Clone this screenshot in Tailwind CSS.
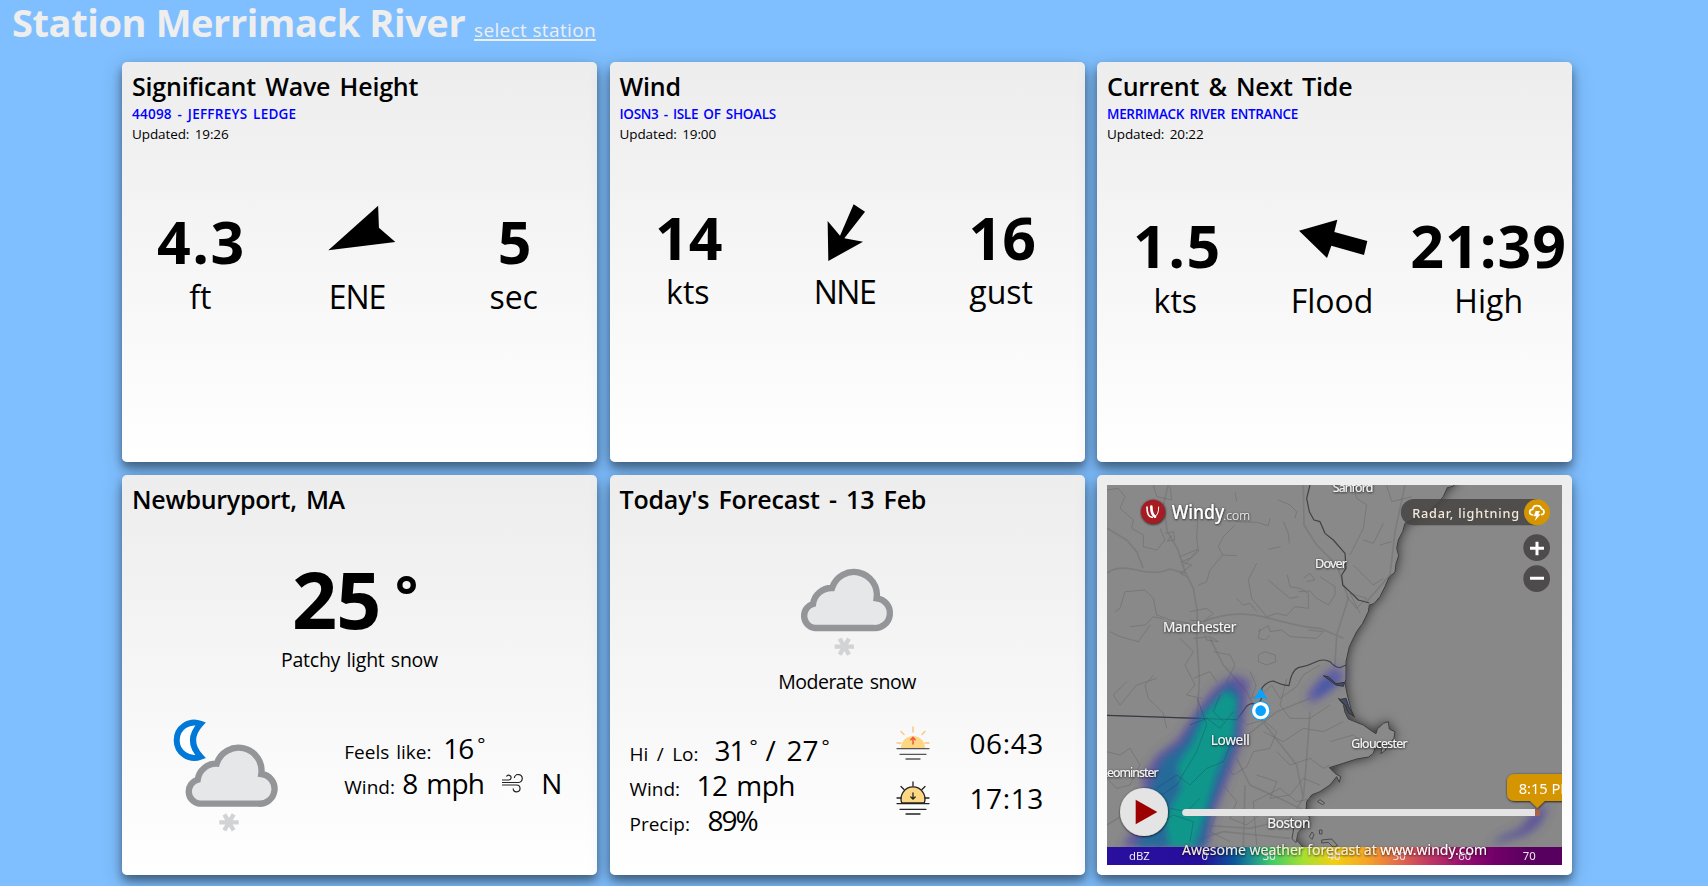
<!DOCTYPE html>
<html lang="en">
<head>
<meta charset="utf-8">
<title>Station Merrimack River</title>
<script src="https://cdn.jsdelivr.net/npm/@tailwindcss/browser@4"></script>
</head>
<body class="h-[886px] overflow-hidden bg-[#7fbfff] font-['Open_Sans',sans-serif] text-black">
<svg class="hidden">
  <symbol id="cloud-snow" viewBox="218 874 300 280">
    <path d="M273 1060H450A44 44 0 0 0 460 971A69 69 0 0 0 326 940A56 56 0 0 0 269 988A37 37 0 0 0 273 1060Z" fill="#e6e7e9" stroke="#939598" stroke-width="19"/>
    <path d="M334 1116H392M349 1092L377 1140M377 1092L349 1140" stroke="#d1d3d4" stroke-width="13"/>
  </symbol>
</svg>

<header class="flex h-[62px] items-baseline pl-[12px] text-[#eee]">
  <h1 class="w-[462px] text-[38px] leading-[44px] font-bold tracking-[-0.4px] whitespace-nowrap">Station Merrimack River</h1>
  <a class="text-[19px] leading-[28px] tracking-[0.35px] whitespace-nowrap underline decoration-2 underline-offset-[2px]">select station</a>
</header>

<main class="ml-[122px] grid grid-cols-[475px_475px_475px] grid-rows-[400px_400px] gap-x-[12.5px] gap-y-[13px]">

  <section class="rounded-[5px] bg-linear-to-b from-[#ededed] to-white pt-[9px] shadow-[0_6px_9px_rgba(0,0,0,0.36),0_6px_20px_rgba(0,0,0,0.26)]">
    <h2 class="h-[30px] pl-[10px] text-[25px] leading-[30px] font-semibold tracking-[-0.2px] [word-spacing:3px] whitespace-nowrap">Significant Wave Height</h2>
    <p class="mt-[3px] h-[20px] pl-[10px] text-[13.5px] leading-[20px] font-semibold tracking-[0.24px] [word-spacing:2px] text-[#0000ff]">44098 - JEFFREYS LEDGE</p>
    <p class="h-[20px] pl-[10px] text-[13.5px] leading-[20px] tracking-[-0.1px] [word-spacing:2px]">Updated: 19:26</p>
    <div class="mt-[67px] grid w-[470px] grid-cols-3 text-center">
      <div><p class="pl-[2px] text-[59px] leading-[60px] font-bold tracking-[1.5px]">4.3</p><p class="mt-[6px] text-[32px] leading-[40px]">ft</p></div>
      <div>
        <svg class="h-[60px] w-full overflow-visible" viewBox="278.67 211 156.67 60"><path d="M377.8 205.7L378.6 227.7L395 242L328 250.3Z"/></svg>
        <p class="mt-[6px] text-[32px] leading-[40px] tracking-[-1px]">ENE</p>
      </div>
      <div><p class="pl-[2px] text-[59px] leading-[60px] font-bold">5</p><p class="mt-[6px] text-[32px] leading-[40px]">sec</p></div>
    </div>
  </section>

  <section class="rounded-[5px] bg-linear-to-b from-[#ededed] to-white pt-[9px] shadow-[0_6px_9px_rgba(0,0,0,0.36),0_6px_20px_rgba(0,0,0,0.26)]">
    <h2 class="h-[30px] pl-[10px] text-[25px] leading-[30px] font-semibold tracking-[-0.2px] [word-spacing:3px] whitespace-nowrap">Wind</h2>
    <p class="mt-[3px] h-[20px] pl-[10px] text-[13.5px] leading-[20px] font-semibold tracking-[-0.3px] [word-spacing:2px] text-[#0000ff]">IOSN3 - ISLE OF SHOALS</p>
    <p class="h-[20px] pl-[10px] text-[13.5px] leading-[20px] tracking-[-0.1px] [word-spacing:2px]">Updated: 19:00</p>
    <div class="mt-[63px] grid w-[470px] grid-cols-3 text-center">
      <div><p class="pl-[2px] text-[59px] leading-[60px] font-bold">14</p><p class="mt-[5px] text-[32px] leading-[40px]">kts</p></div>
      <div>
        <svg class="h-[60px] w-full overflow-visible" viewBox="766.67 207 156.67 60"><path d="M854.3 204.3L865.7 211.7L845 238.3L863.7 241.7L829 261L828.3 221L840.7 235.7Z"/></svg>
        <p class="mt-[5px] text-[32px] leading-[40px] tracking-[-1.5px]">NNE</p>
      </div>
      <div><p class="pl-[2px] text-[59px] leading-[60px] font-bold">16</p><p class="mt-[5px] text-[32px] leading-[40px]">gust</p></div>
    </div>
  </section>

  <section class="rounded-[5px] bg-linear-to-b from-[#ededed] to-white pt-[9px] shadow-[0_6px_9px_rgba(0,0,0,0.36),0_6px_20px_rgba(0,0,0,0.26)]">
    <h2 class="h-[30px] pl-[10px] text-[25px] leading-[30px] font-semibold tracking-[-0.2px] [word-spacing:3px] whitespace-nowrap">Current &amp; Next Tide</h2>
    <p class="mt-[3px] h-[20px] pl-[10px] text-[13.5px] leading-[20px] font-semibold tracking-[-0.3px] [word-spacing:2px] text-[#0000ff]">MERRIMACK RIVER ENTRANCE</p>
    <p class="h-[20px] pl-[10px] text-[13.5px] leading-[20px] tracking-[-0.1px] [word-spacing:2px]">Updated: 20:22</p>
    <div class="mt-[71px] grid w-[470px] grid-cols-3 text-center">
      <div><p class="pl-[4px] text-[59px] leading-[60px] font-bold tracking-[1.5px]">1.5</p><p class="mt-[6px] text-[32px] leading-[40px]">kts</p></div>
      <div>
        <svg class="h-[60px] w-full overflow-visible" viewBox="1253.67 215 156.67 60"><path d="M1298.7 230.7L1337 219.7L1334 232L1367 241L1363.7 255L1331 245.7L1326.7 258Z"/></svg>
        <p class="mt-[6px] text-[32px] leading-[40px]">Flood</p>
      </div>
      <div><p class="text-[59px] leading-[60px] font-bold tracking-[1px]">21:39</p><p class="mt-[6px] text-[32px] leading-[40px]">High</p></div>
    </div>
  </section>

  <section class="rounded-[5px] bg-linear-to-b from-[#ededed] to-white pt-[9px] shadow-[0_6px_9px_rgba(0,0,0,0.36),0_6px_20px_rgba(0,0,0,0.26)]">
    <h2 class="h-[30px] pl-[10px] text-[25px] leading-[30px] font-semibold tracking-[-0.3px] [word-spacing:3px] whitespace-nowrap">Newburyport, MA</h2>
    <div class="mt-[45px] flex h-[80px] pl-[170px] text-[79px] leading-[80px] font-bold">
      <span class="w-[103px] tracking-[-1px]">25</span><span class="-translate-y-[5px] text-[54px]">°</span>
    </div>
    <p class="mt-[7px] text-center text-[19.5px] leading-[28px] tracking-[-0.25px] [word-spacing:1.500px]">Patchy light snow</p>
    <div class="mt-[43px] flex pl-[46px]">
      <svg class="h-[116.7px] w-[113.3px]" viewBox="180 800 340 350">
        <path d="M278 820A53 53 0 1 0 278 919Q232 870 278 820Z" fill="#fff" stroke="#0078d7" stroke-width="18"/>
        <use href="#cloud-snow" x="218" y="874" width="300" height="280"/>
      </svg>
      <div class="ml-[63px] pt-[14px] text-[28px] leading-[35px] whitespace-nowrap">
        <div class="flex h-[35px] items-baseline"><span class="w-[99px] text-[19px] [word-spacing:2px]">Feels like:</span><span class="w-[34px] tracking-[-1px]">16</span><span class="-translate-y-[8px] text-[19px]">°</span></div>
        <div class="flex h-[35px] items-baseline"><span class="w-[58px] text-[19px]">Wind:</span><span class="w-[100px] tracking-[-0.7px] [word-spacing:2px]">8 mph</span>
          <svg class="h-[19px] w-[22px] self-center" viewBox="0 0 22 19" fill="none" stroke="#222" stroke-width="1.2"><path d="M0 8.5H16A4 4 0 1 0 12.3 4M0 6H6.5A2.4 2.4 0 1 0 4.5 2.6M0 11H14.5A3.4 3.4 0 1 1 11.2 14.5"/></svg>
          <span class="ml-[17px] tracking-[-1px]">N</span></div>
      </div>
    </div>
  </section>

  <section class="rounded-[5px] bg-linear-to-b from-[#ededed] to-white pt-[9px] shadow-[0_6px_9px_rgba(0,0,0,0.36),0_6px_20px_rgba(0,0,0,0.26)]">
    <h2 class="h-[30px] pl-[10px] text-[25px] leading-[30px] font-semibold tracking-[-0.2px] [word-spacing:3px] whitespace-nowrap">Today's Forecast - 13 Feb</h2>
    <svg class="mt-[51.7px] ml-[186.500px] h-[93.3px] w-[100px]" viewBox="0 0 300 280"><use href="#cloud-snow" width="300" height="280"/></svg>
    <p class="mt-[9px] text-center text-[19.5px] leading-[28px] tracking-[-0.5px] [word-spacing:2px]">Moderate snow</p>
    <div class="mt-[20px] flex">
      <div class="w-[286px] pt-[17px] pl-[20px] text-[28px] leading-[35px] whitespace-nowrap">
        <div class="flex h-[35px] items-baseline"><span class="w-[85px] text-[19px] [word-spacing:3.500px]">Hi / Lo:</span><span class="w-[35px] tracking-[-1px]">31</span><span class="w-[16px] -translate-y-[8px] text-[19px]">°</span><span class="w-[21px]">/</span><span class="w-[35px]">27</span><span class="-translate-y-[8px] text-[19px]">°</span></div>
        <div class="flex h-[35px] items-baseline"><span class="w-[67px] text-[19px]">Wind:</span><span class="tracking-[-0.5px] [word-spacing:2px]">12 mph</span></div>
        <div class="flex h-[35px] items-baseline"><span class="w-[78px] text-[19px]">Precip:</span><span class="tracking-[-2px]">89%</span></div>
      </div>
      <div class="text-[28px] leading-[55px]">
        <div class="flex h-[55px] items-center">
          <svg class="h-[34px] w-[34px]" viewBox="0 0 34 34" fill="none" stroke-linecap="round"><path d="M5 22A12 12 0 1 1 29 22Z" fill="#fdd783"/><path d="M17 1V6M5 5.5L8 8.5M29 5.5L26 8.5M1 17H5M29 17H33" stroke="#fcc57c" stroke-width="1.4"/><path d="M17 18V12M14.8 13.8L17 11.3L19.2 13.8" stroke="#f05a40" stroke-width="1.5"/><path d="M1 22.6H33M4 28.3H30M10 33H24" stroke="#555" stroke-width="1.3"/></svg>
          <span class="ml-[40px] pt-px tracking-[0.6px]">06:43</span>
        </div>
        <div class="flex h-[55px] items-center">
          <svg class="h-[34px] w-[34px]" viewBox="0 0 34 34" fill="none" stroke="#222" stroke-linecap="round" stroke-width="1.3"><path d="M5.700 22A12 12 0 1 1 28.300 22Z" fill="#fdd783"/><path d="M17 1V5M5 5.500L8 8.500M29 5.500L26 8.500M1 17H5M29 17H33M17 12V18M14.800 16L17 18.200L19.200 16M1 22.600H33M4 28.300H30M10 33H24"/></svg>
          <span class="ml-[40px] pt-px tracking-[0.6px]">17:13</span>
        </div>
      </div>
    </div>
  </section>

  <section class="rounded-[5px] bg-linear-to-b from-[#ededed] to-white p-[10px] shadow-[0_6px_9px_rgba(0,0,0,0.36),0_6px_20px_rgba(0,0,0,0.26)]">
    <svg class="block h-[380px] w-[455px]" viewBox="51 60 1365 1140" font-family="'Noto Sans','Open Sans',sans-serif">
      <defs>
        <linearGradient id="dbz" gradientUnits="userSpaceOnUse" x1="51" y1="0" x2="1416" y2="0">
          <stop offset="0" stop-color="#2a0f9e"/><stop offset=".21" stop-color="#260f9c"/><stop offset=".28" stop-color="#0b5799"/><stop offset=".32" stop-color="#1f9390"/><stop offset=".36" stop-color="#3ecb67"/><stop offset=".43" stop-color="#a5df33"/><stop offset=".5" stop-color="#f2cf12"/><stop offset=".57" stop-color="#f5a627"/><stop offset=".64" stop-color="#e36a4d"/><stop offset=".71" stop-color="#bd3865"/><stop offset=".78" stop-color="#96106e"/><stop offset=".85" stop-color="#73006a"/><stop offset=".93" stop-color="#58005f"/>
        </linearGradient>
        <filter id="coast" x="-20%" y="-20%" width="140%" height="140%"><feDropShadow dx="0" dy="0" stdDeviation="17" flood-color="#000" flood-opacity=".65"/></filter>
        <filter id="b8" x="-30%" y="-30%" width="160%" height="160%"><feGaussianBlur stdDeviation="10"/></filter>
        <filter id="b14" x="-30%" y="-30%" width="160%" height="160%"><feGaussianBlur stdDeviation="13"/></filter>
        <filter id="ts" x="-10%" y="-30%" width="120%" height="160%"><feDropShadow dx="1" dy="2" stdDeviation="2.5" flood-color="#000" flood-opacity=".9"/></filter>
      </defs>
      <rect x="51" y="60" width="1365" height="1140" fill="#888"/>
      <path filter="url(#coast)" fill="#898989" stroke="#3c3c3c" stroke-width="3" stroke-linejoin="round" d="M1095 50L1090 64L1072 68L1060 95L1040 118L1020 135L975 160L945 175L938 200L925 225L920 250L926 272L918 296L915 322L898 335L885 365L870 395L852 416L838 420L835 440L818 475L800 500L778 545L768 590L768 640L765 655L772 690L784 735L794 757L780 745L768 712L745 700L760 718L765 742L775 762L790 768L820 780L845 798L858 806L862 792L880 775L895 770L898 792L915 800L912 820L896 838L884 858L872 866L880 835L860 835L850 865L836 876L800 882L760 895L718 908L735 925L752 935L748 952L740 935L720 960L690 980L665 990L650 1010L648 1040L660 1060L640 1085L615 1095L612 1120L625 1130L650 1160L650 1230L0 1230L0 0L1095 0Z"/>
      <g fill="#898989" stroke="#4a4a4a" stroke-width="3"><path d="M682 1010l8-6 14 10-6 5zM658 1115l8-14 6 8-6 14zM695 1125l30-3 18 20-14 4-14-14-20 2zM688 1095l8 0 0 12-7 0zM612 1085l18-12 8 14-14 16-6 30-12-12z"/></g>
      <g fill="none" stroke="#747474" stroke-width="5" opacity=".6" stroke-linejoin="round">
        <path d="M235 60L220 120L232 200L262 250L285 320L310 370L322 440L320 520L328 640L322 760"/>
        <path d="M51 325Q80 300 140 315T240 312L285 325"/><path d="M51 190L110 225L140 260L160 310"/>
        <path d="M340 470Q430 430 540 460T690 490L760 520"/><path d="M640 60L642 180L680 240L740 300L775 400L740 510L735 600"/>
        <path d="M945 60L915 200L900 330L830 410"/><path d="M360 520L400 600L470 680L510 760L620 900L640 1000L600 1060"/>
        <path d="M51 1080L180 1000L330 920L460 820L560 740L660 700"/><path d="M440 880L480 960L590 1010L650 1040"/><path d="M660 740L650 880L640 1000M465 960L460 1146"/>
        <path d="M200 1146L330 1080L480 1090L610 1060M250 1146L400 1100L600 1120"/>
      </g>
      <g fill="none" stroke="#686868" stroke-width="2.4" opacity=".65" stroke-linejoin="round">
        <path d="M51 75L85 70L105 95L90 130L130 165L125 190L160 210L160 245L200 255L225 225L210 190M190 60L200 95L245 105L240 65"/>
        <path d="M225 205L250 200L255 225L232 228L245 212M270 275L325 252L300 280L275 290L305 300L270 325L290 335"/>
        <path d="M325 130L320 220L325 260L280 300M435 180L400 215L385 245L398 270L440 272M398 270L360 315L350 350L325 360M435 82L440 108"/>
        <path d="M565 105L600 120L620 140L615 160M440 170L500 172L535 182L540 160M580 170L595 205L598 235M535 253L572 245"/>
        <path d="M500 295L475 345L485 400L530 455L560 445L590 452L615 425L655 430L655 385L630 370L600 365L592 330M535 345L570 375L600 400L625 395M440 400L460 420L480 415L500 440"/>
        <path d="M640 340L660 325L675 345L650 350M690 335L735 365L735 390L715 420L680 400L660 378L625 380"/>
        <path d="M75 440L90 430L105 380L165 375L190 400L200 450L240 465L300 475M120 485L165 480L190 455L220 462M60 500L90 515L145 530L180 480"/>
        <path d="M790 60L800 100L830 120L820 190L780 270M890 60L905 110L965 95M820 225L850 235L880 175M790 300L850 360L880 340M870 240L905 230M770 395L800 430L830 400L780 385L810 445"/>
        <path d="M505 500L535 482L540 500L575 495L600 515L680 520L700 500L655 495M510 490L505 520L525 525L540 512M505 570L525 560L555 570L558 590L530 600L505 590Z"/>
        <path d="M300 440L350 430L370 445L340 470L300 465M310 520L360 515L385 530L350 525L345 510M270 520L310 560L285 600L315 660L290 690L335 700M370 560L420 570L435 600L410 650L440 690M310 640L360 620L380 650M480 620L498 660L485 700L525 680L545 660L570 700L620 665L640 630L690 600"/>
        <path d="M190 630L165 660L175 700L220 745L230 790M110 650L70 690L90 720L140 660L200 640M51 860L90 870L120 850L150 900L120 960L80 970L51 940"/>
        <path d="M300 780L350 760L390 790L430 740L470 780L520 765L560 800L540 850L490 860L470 905L430 930L400 890L350 910L300 960L260 930L200 970"/>
        <path d="M520 800L580 830L640 790L700 800L760 770M560 860L600 900L660 880L700 910L720 900M500 930L560 950L540 1000L600 990L640 940L690 960M590 640L570 720L600 760L660 760L720 720"/>
        <path d="M400 960L440 1010L420 1060L470 1080L520 1040L590 1040M330 1000L380 1040L360 1100L420 1130M200 1080L250 1050L310 1070L300 1130M720 830L790 810L840 850M670 1000L620 1010L570 970L490 1010L500 1140"/>
      </g>
      <g fill="none" stroke="#404040" stroke-width="3.5" stroke-linejoin="round">
        <path d="M660 60L650 100L658 140L672 165L690 170L705 205L730 225L765 265L768 310L755 330L758 360L785 385L805 405L838 414"/>
        <path d="M51 751L440 764Q455 745 465 730T490 716T512 706T515 670Q530 650 550 648Q575 660 597 662Q605 615 625 608Q650 605 675 592T720 590Q735 608 750 608L768 600"/>
      </g>
      <g filter="url(#b14)"><path d="M430 630L478 645L455 830L412 950L372 1050L352 1146L95 1146L175 1030L155 940L200 870L260 825L325 730L375 665Z" fill="#5147a5" opacity=".72"/><path d="M740 600L765 640L705 690L660 715L650 690L690 640Z" fill="#5047b5" opacity=".65"/><path d="M1380 1020L1350 1080L1310 1110L1200 1140L1230 1115L1290 1090L1330 1040Z" fill="#5048a0" opacity=".75"/></g>
      <g filter="url(#b8)"><path d="M420 655L448 690L440 820L400 930L362 1030L340 1146L135 1146L200 1050L180 970L215 885L280 835L332 745Z" fill="#176f98" opacity=".82"/><path d="M405 680L440 700L428 815L375 930L340 1060L310 1146L240 1146L225 1060L275 970L262 900L310 830L345 745Z" fill="#10a288" opacity=".8"/><path d="M725 635L740 655L690 690L672 700L690 660Z" fill="#3a5aa5" opacity=".7"/></g>
      <g fill="none" stroke="#225" stroke-opacity=".3" stroke-width="2.4"><path d="M300 780L350 760L390 790L430 740M200 970L260 930L300 960L350 910L400 890L430 820M322 700L350 780L320 860L260 960L170 1020M200 1080L250 1050L310 1070L300 1130M330 1000L290 1040L240 1030M51 751L440 764M390 690L370 740L400 770"/></g>
      <path d="M700 632l16 4 22 20 26-4-4 12-22-4zM768 700l8 24 14 28-14-8-10-24-18-16z" fill="#444b6c" stroke="#333" stroke-width="3"/>
      <rect x="51" y="1146" width="1365" height="54" fill="url(#dbz)"/>

      <g fill="#f5f5f5" filter="url(#ts)" font-size="41">
        <text x="728" y="81" font-size="37" textLength="122">Sanford</text>
        <text x="675" y="309" font-size="38" textLength="96">Dover</text>
        <text x="219" y="501" textLength="220">Manchester</text>
        <text x="362" y="840" textLength="117">Lowell</text>
        <text x="784" y="848" font-size="37" textLength="169">Gloucester</text>
        <text x="34" y="935" font-size="37" textLength="172">Leominster</text>
        <text x="532" y="1088" textLength="129">Boston</text>
      </g>

      <path d="M512 669L534 705Q512 693 490 705Z" fill="#0ba1ff"/><circle cx="512" cy="737" r="29" fill="#0ba1ff"/><circle cx="512" cy="737" r="26" fill="#fff"/><circle cx="512" cy="737" r="16" fill="#0ba1ff"/>

      <g filter="url(#ts)"><circle cx="189" cy="140" r="36" fill="#a71a23"/><g fill="none" stroke="#fff" stroke-linecap="round"><path d="M171 126Q171 157 187 157" stroke-width="5"/><path d="M184 125Q184 148 195 155" stroke-width="8"/><path d="M206 126Q207 148 194 156" stroke-width="3"/></g>
        <text x="245" y="162" font-size="57" font-weight="500" fill="#fff" textLength="158" lengthAdjust="spacingAndGlyphs">Windy</text><text x="400" y="164" font-size="40" font-weight="300" fill="#eee" textLength="80" lengthAdjust="spacingAndGlyphs">.com</text></g>

      <path d="M972 102H1341V181H972A39.500 39.500 0 0 1 972 102Z" fill="#474343" fill-opacity=".85"/>
      <text x="967" y="159" font-size="38" font-weight="500" fill="#f3ead9" textLength="320">Radar, lightning</text>
      <circle cx="1341" cy="142" r="39" fill="#d49500"/>
      <path d="M1330 150Q1319 150 1319 141Q1319 133 1328 133Q1330 121 1342 122Q1352 122 1355 132Q1363 134 1362 142Q1361 149 1353 149" fill="none" stroke="#fff" stroke-width="5"/><path d="M1337 138L1350 138L1345 148L1352 148L1334 168L1339 154L1331 154Z" fill="#fff"/>
      <circle cx="1340" cy="248" r="40" fill="#4d4b4b"/><circle cx="1340" cy="341" r="40" fill="#4d4b4b"/>
      <path d="M1320 250H1362M1341 230V271M1320 340H1362" stroke="#fff" stroke-width="9"/>

      <circle cx="162" cy="1041" r="72" fill="#e4e4e4" filter="url(#ts)"/><path d="M137 1004L202 1041L137 1078Z" fill="#9d0000"/>
      <path d="M1336 1032H287A10.500 10.500 0 0 0 287 1053H1336Z" fill="#e4e4e4"/><rect x="1335" y="1032" width="15" height="21" fill="#a5624c"/>
      <path d="M1275 927H1450V1008H1364L1342 1029L1320 1008H1275Q1251 1008 1251 984V951Q1251 927 1275 927Z" fill="#d49500" filter="url(#ts)"/>
      <text x="1286" y="987" font-size="44" fill="#fff" textLength="165">8:15 PM</text>

      <g fill="#f0e9f0" font-size="34" text-anchor="middle"><text x="148" y="1186">dBZ</text><text x="344" y="1186">0</text><text x="538" y="1186">30</text><text x="732" y="1186">40</text><text x="928" y="1186">50</text><text x="1124" y="1186">60</text><text x="1318" y="1186">70</text></g>
      <text x="276" y="1170" font-size="42" fill="#f3ead9" filter="url(#ts)" textLength="915">Awesome weather forecast at <tspan fill="#fff">www.windy.com</tspan></text>
    </svg>
  </section>
</main>
</body>
</html>
